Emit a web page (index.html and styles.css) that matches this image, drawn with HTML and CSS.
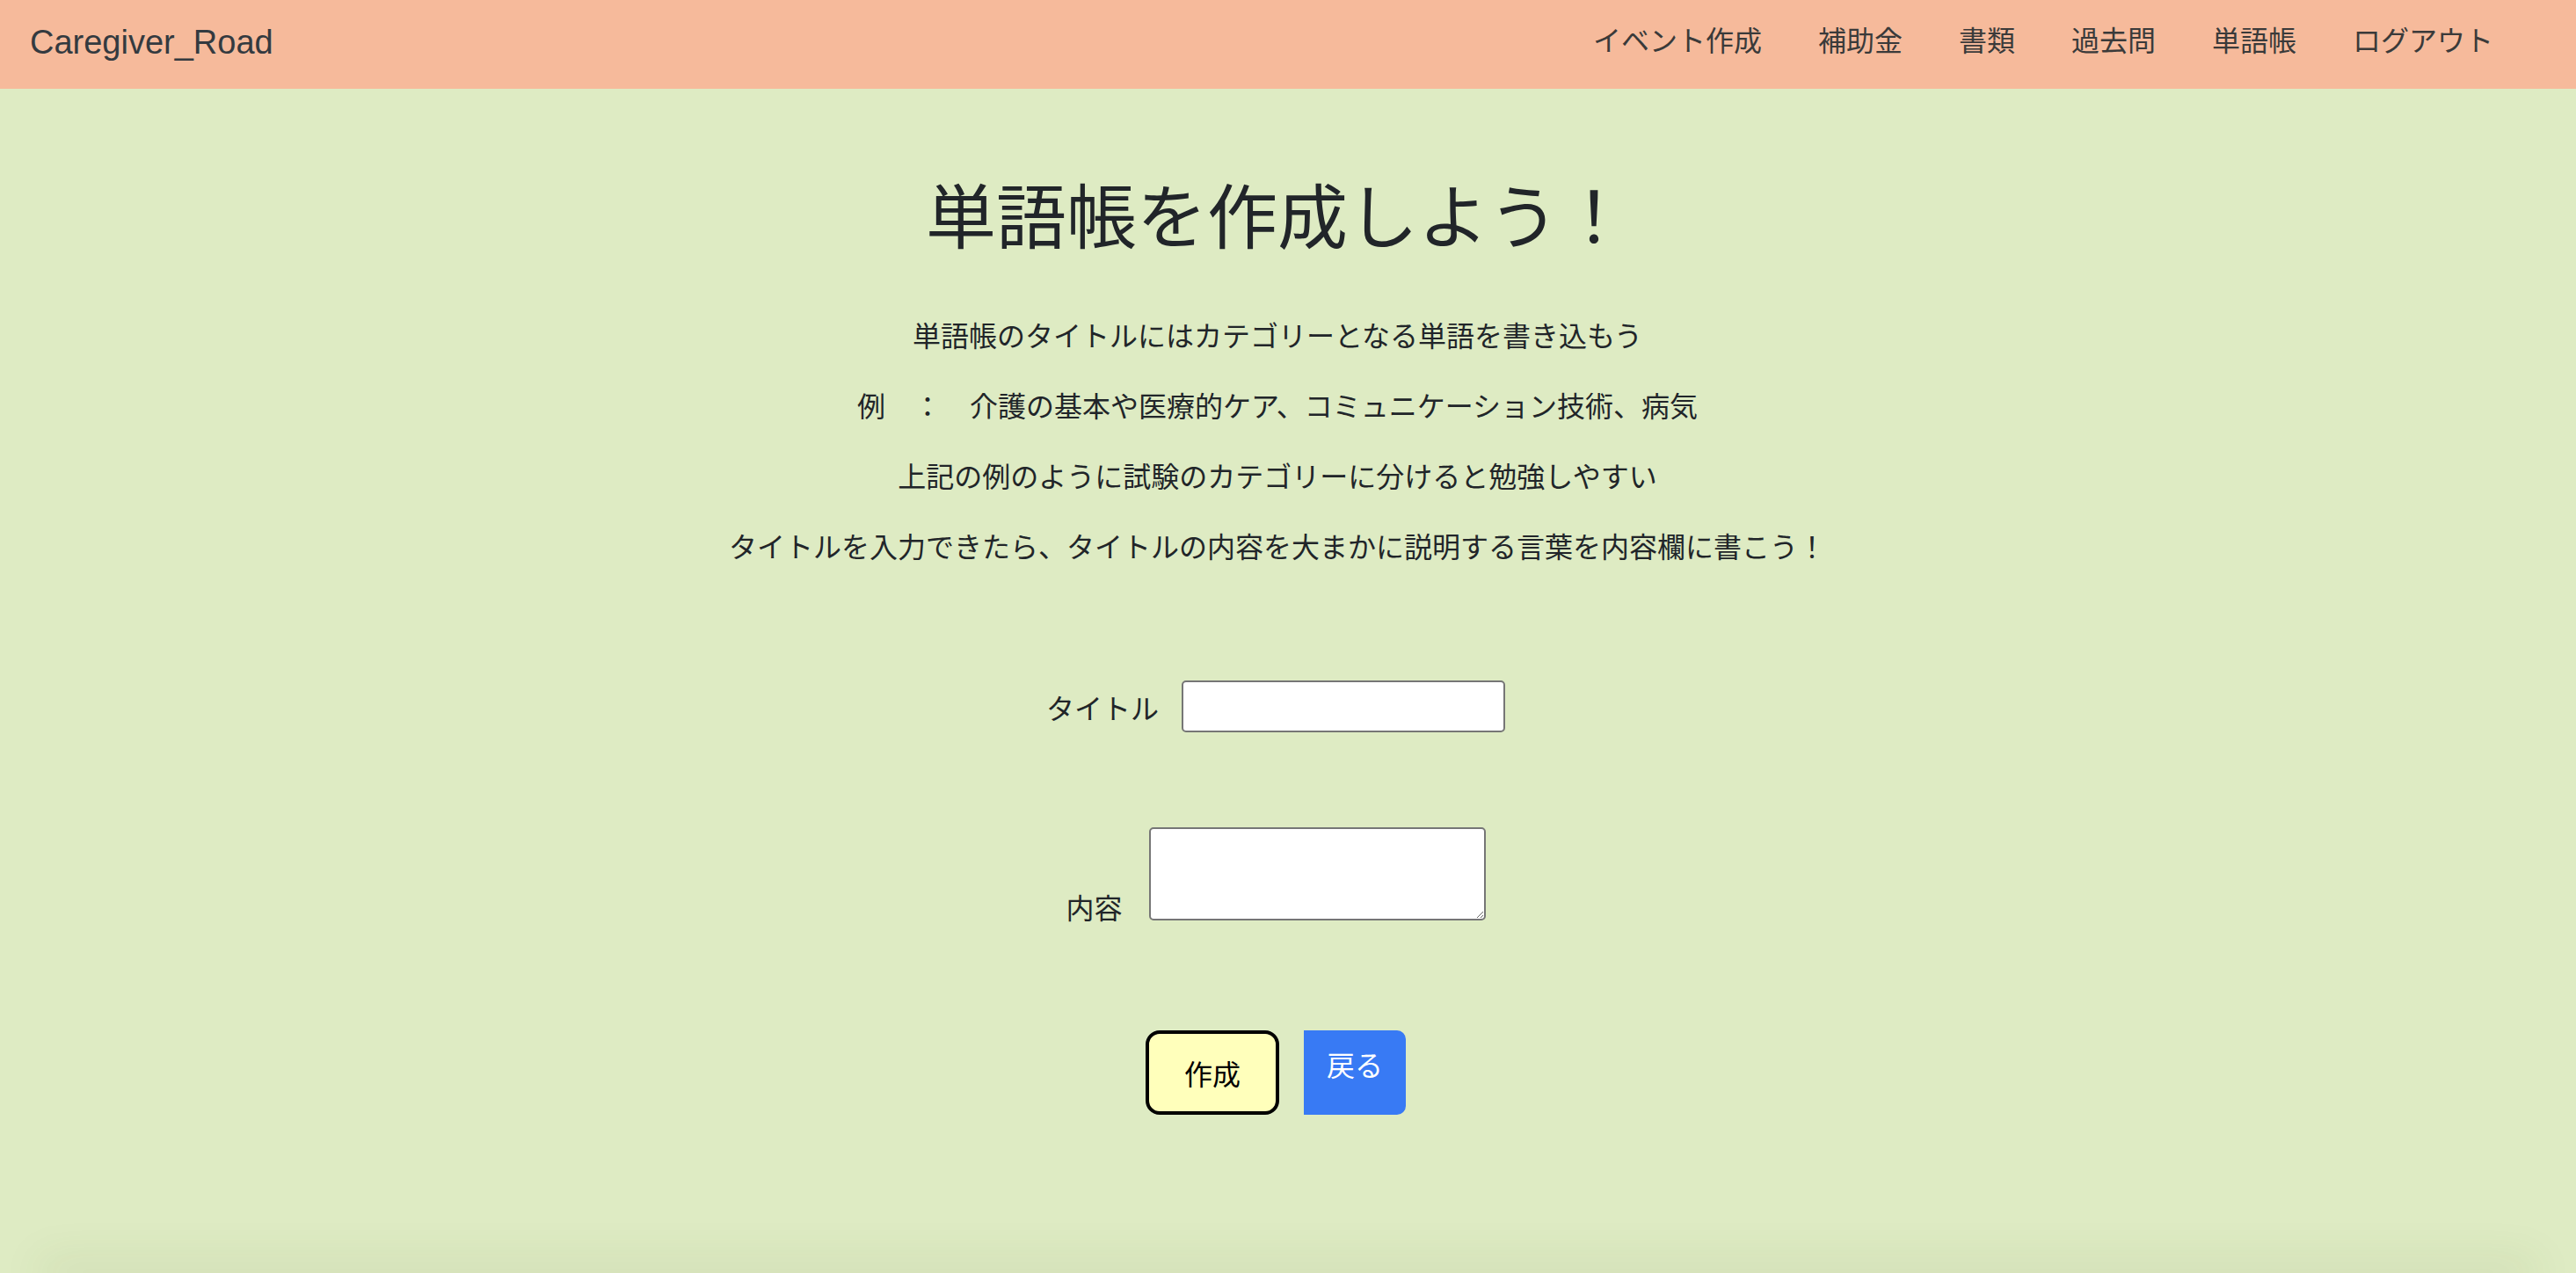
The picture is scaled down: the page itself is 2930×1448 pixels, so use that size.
FILE: index.html
```html
<!DOCTYPE html>
<html lang="ja">
<head>
<meta charset="utf-8">
<title>単語帳を作成しよう！</title>
<link rel="stylesheet" href="styles.css">
</head>
<body>
<header class="navbar">
  <a class="brand" href="#">Caregiver_Road</a>
  <nav class="nav">
    <a class="nav-link" href="#">イベント作成</a>
    <a class="nav-link" href="#">補助金</a>
    <a class="nav-link" href="#">書類</a>
    <a class="nav-link" href="#">過去問</a>
    <a class="nav-link" href="#">単語帳</a>
    <a class="nav-link" href="#">ログアウト</a>
  </nav>
</header>
<main class="main">
  <h1 class="title">単語帳を作成しよう！</h1>
  <p class="lead">単語帳のタイトルにはカテゴリーとなる単語を書き込もう</p>
  <p class="lead">例　：　介護の基本や医療的ケア、コミュニケーション技術、病気</p>
  <p class="lead">上記の例のように試験のカテゴリーに分けると勉強しやすい</p>
  <p class="lead last">タイトルを入力できたら、タイトルの内容を大まかに説明する言葉を内容欄に書こう！</p>
  <form class="form">
    <div class="row row-title">
      <label class="label label-title" for="title">タイトル</label>
      <input class="input" type="text" id="title">
    </div>
    <div class="row row-body">
      <label class="label label-body" for="body">内容</label>
      <textarea class="textarea" id="body"></textarea>
    </div>
    <div class="actions">
      <button class="btn-create" type="button">作成</button>
      <a class="btn-back" href="#">戻る</a>
    </div>
  </form>
</main>
<footer class="footer"></footer>
</body>
</html>
```
FILE: styles.css
```css
html, body {
  margin: 0;
  padding: 0;
}

body {
  height: 100vh;
  display: flex;
  flex-direction: column;
  background: #deebc3;
  color: #212529;
  font-family: "Noto Sans CJK JP", "Liberation Sans", sans-serif;
  overflow: hidden;
}

.navbar {
  box-sizing: border-box;
  height: 101px;
  flex: 0 0 auto;
  display: flex;
  align-items: center;
  justify-content: space-between;
  padding: 0 62px 9px 34px;
  background: #f6ba9b;
}

.brand {
  font-family: "Liberation Sans", "Noto Sans CJK JP", sans-serif;
  font-size: 38px;
  line-height: 60px;
  color: #343a40;
  text-decoration: none;
  margin-top: 4px;
}

.nav {
  display: flex;
  align-items: center;
}

.nav-link {
  font-size: 32px;
  line-height: 48px;
  padding: 0 32px;
  color: #3a3a3a;
  text-decoration: none;
  margin-bottom: 4px;
}

.main {
  flex: 1 1 auto;
  display: flex;
  flex-direction: column;
  align-items: center;
  padding-right: 24px;
}

.title {
  font-size: 80px;
  line-height: 96px;
  font-weight: 400;
  margin: 92px 0 67px;
}

.lead {
  font-size: 32px;
  line-height: 48px;
  margin: 0 0 32px;
}

.lead.last {
  margin-bottom: 0;
}

.form {
  display: flex;
  flex-direction: column;
  align-items: center;
  margin-top: 130px;
  padding-right: 4px;
}

.row {
  display: flex;
  justify-content: center;
}

.row-title {
  align-items: center;
}

.row-body {
  align-items: flex-end;
  margin-top: 108px;
}

.label {
  font-size: 32px;
  line-height: 48px;
}

.label-title {
  margin-right: 26px;
}

.label-body {
  margin-right: 30px;
  line-height: 32px;
  margin-bottom: 0;
}

.input {
  box-sizing: border-box;
  width: 368px;
  height: 59px;
  margin: 0;
  padding: 0 8px;
  border: 2px solid #767676;
  border-radius: 5px;
  background: #ffffff;
  font: inherit;
  font-size: 26px;
}

.textarea {
  box-sizing: border-box;
  width: 383px;
  height: 106px;
  margin: 0;
  padding: 4px 8px;
  border: 2px solid #767676;
  border-radius: 5px;
  background: #ffffff;
  font: inherit;
  font-size: 26px;
  resize: both;
}

.actions {
  display: flex;
  justify-content: center;
  align-items: stretch;
  gap: 28px;
  margin-top: 125px;
}

.btn-create {
  box-sizing: border-box;
  font-family: inherit;
  font-size: 32px;
  line-height: 48px;
  padding: 20px 40px;
  border: 4px solid #000000;
  border-radius: 16px;
  background: #ffffbb;
  color: #000000;
  margin: 0;
}

.btn-back {
  box-sizing: border-box;
  display: block;
  font-size: 32px;
  line-height: 48px;
  padding: 12px 24px;
  border: 2px solid #387af4;
  border-radius: 0 10px 10px 0;
  background: #387af4;
  color: #ffffff;
  text-decoration: none;
}

.footer {
  flex: 0 0 0px;
  height: 0;
  margin: 0 60px;
  box-shadow: 0 0 50px 14px rgba(70, 90, 30, 0.1);
}
```
